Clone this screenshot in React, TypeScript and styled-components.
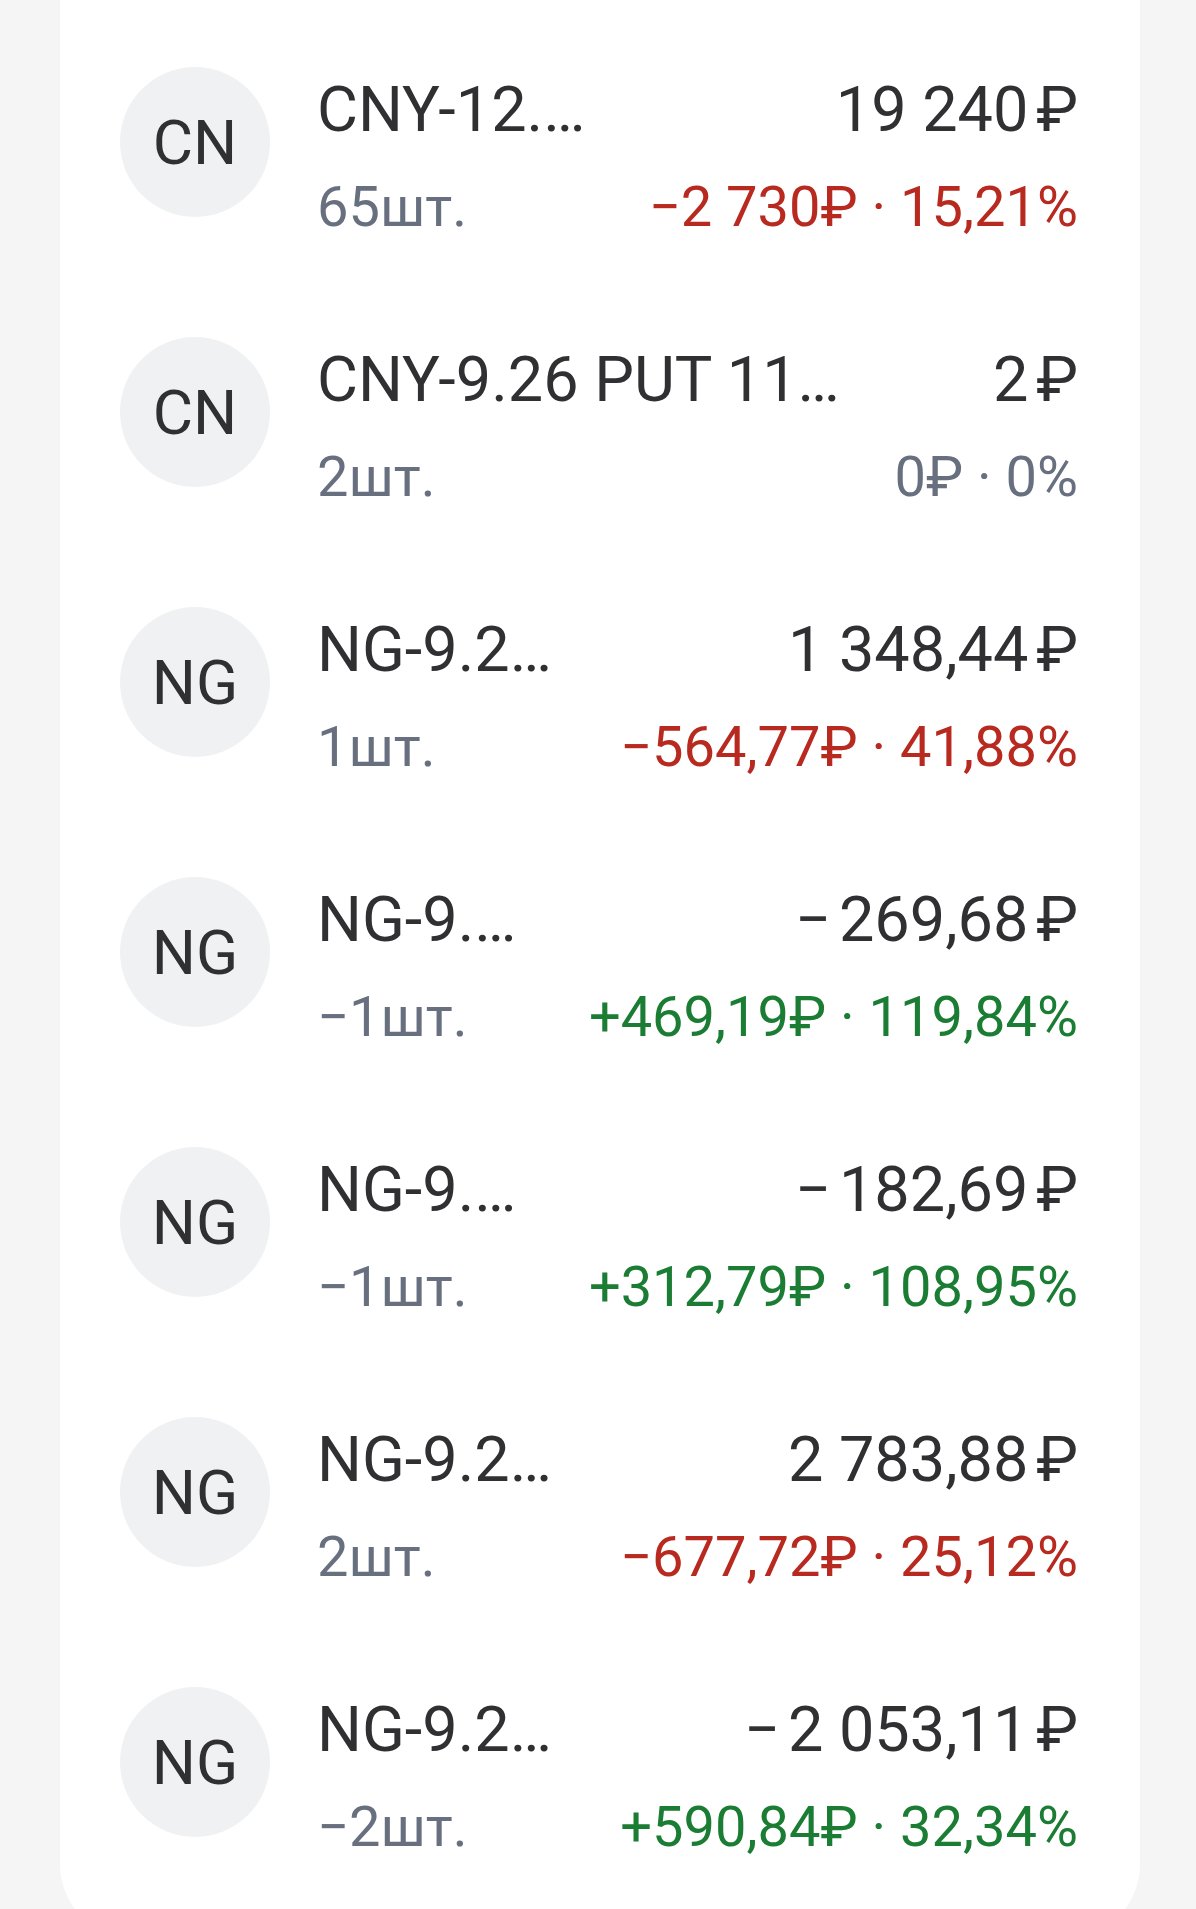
import styled, { createGlobalStyle } from 'styled-components';

type Trend = 'down' | 'up' | 'flat';

interface Position {
  id: number;
  badge: string;
  title: string;
  qty: string;
  value: string;
  pnl: string;
  trend: Trend;
}

const NB = '\u202F';

const positions: Position[] = [
  { id: 1, badge: 'CN', title: 'CNY-12.…', qty: '65шт.', value: `19 240${NB}₽`, pnl: '−2 730₽ · 15,21%', trend: 'down' },
  { id: 2, badge: 'CN', title: 'CNY-9.26 PUT 11…', qty: '2шт.', value: `2${NB}₽`, pnl: '0₽ · 0%', trend: 'flat' },
  { id: 3, badge: 'NG', title: 'NG-9.2…', qty: '1шт.', value: `1 348,44${NB}₽`, pnl: '−564,77₽ · 41,88%', trend: 'down' },
  { id: 4, badge: 'NG', title: 'NG-9.…', qty: '−1шт.', value: `−${NB}269,68${NB}₽`, pnl: '+469,19₽ · 119,84%', trend: 'up' },
  { id: 5, badge: 'NG', title: 'NG-9.…', qty: '−1шт.', value: `−${NB}182,69${NB}₽`, pnl: '+312,79₽ · 108,95%', trend: 'up' },
  { id: 6, badge: 'NG', title: 'NG-9.2…', qty: '2шт.', value: `2 783,88${NB}₽`, pnl: '−677,72₽ · 25,12%', trend: 'down' },
  { id: 7, badge: 'NG', title: 'NG-9.2…', qty: '−2шт.', value: `−${NB}2 053,11${NB}₽`, pnl: '+590,84₽ · 32,34%', trend: 'up' },
];

const trendColor: Record<Trend, string> = {
  down: '#b8291f',
  up: '#1b7d34',
  flat: '#687080',
};

const GlobalStyle = createGlobalStyle`
  html, body {
    margin: 0;
    padding: 0;
    background: #f5f5f6;
    overflow: hidden;
  }
  body {
    font-family: Roboto, "Noto Sans", "Liberation Sans", sans-serif;
    -webkit-font-smoothing: antialiased;
  }
`;

const Page = styled.div`
  padding: 0 56px 0 60px;
`;

const Card = styled.section`
  background: #ffffff;
  border-radius: 0 0 76px 76px;
  padding: 7px 62px 43px 60px;
`;

const Row = styled.div`
  display: flex;
  align-items: center;
  height: 270px;
`;

const Badge = styled.div`
  flex-shrink: 0;
  width: 150px;
  height: 150px;
  border-radius: 50%;
  background: #f0f1f3;
  color: #303033;
  font-size: 62px;
  font-weight: 400;
  display: flex;
  align-items: center;
  justify-content: center;
  margin-right: 47px;
`;

const Body = styled.div`
  flex: 1;
  min-width: 0;
  align-self: flex-start;
  padding-top: 63px;
  display: grid;
  grid-template-columns: minmax(0, 1fr) auto;
  column-gap: 36px;
  row-gap: 17px;
`;

const Title = styled.div`
  font-size: 63px;
  line-height: 80px;
  color: #303033;
  white-space: nowrap;
  overflow: hidden;
  text-overflow: ellipsis;
`;

const Value = styled.div`
  font-size: 63px;
  line-height: 80px;
  color: #303033;
  text-align: right;
  white-space: nowrap;
`;

const Qty = styled.div`
  font-size: 56px;
  line-height: 80px;
  color: #687080;
  white-space: nowrap;
`;

const Pnl = styled.div<{ $trend: Trend }>`
  font-size: 56px;
  line-height: 80px;
  color: ${(p) => trendColor[p.$trend]};
  text-align: right;
  white-space: nowrap;
`;

export default function App(): JSX.Element {
  return (
    <>
      <GlobalStyle />
      <Page>
        <Card>
          {positions.map((pos) => (
            <Row key={pos.id}>
              <Badge>{pos.badge}</Badge>
              <Body>
                <Title>{pos.title}</Title>
                <Value>{pos.value}</Value>
                <Qty>{pos.qty}</Qty>
                <Pnl $trend={pos.trend}>{pos.pnl}</Pnl>
              </Body>
            </Row>
          ))}
        </Card>
      </Page>
    </>
  );
}
